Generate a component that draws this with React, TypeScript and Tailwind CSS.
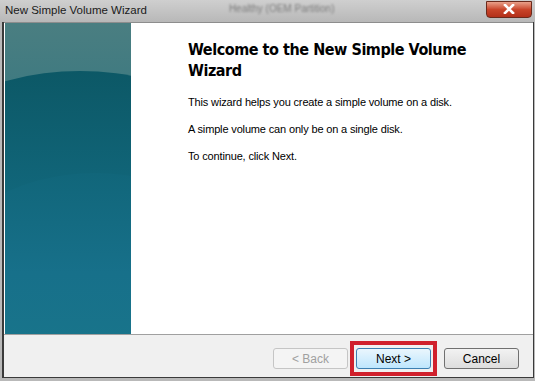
import React from 'react';

function WizardButton({ label, disabled, focused }: { label: string; disabled?: boolean; focused?: boolean }) {
  return (
    <button
      disabled={disabled}
      className={`w-[75px] h-[21px] rounded-[3px] border text-[12px] leading-none ${
        disabled
          ? 'border-[#c5c5c5] bg-[#f4f4f4] text-[#a0a0a0]'
          : focused
          ? 'border-[#3c7fb1] bg-gradient-to-b from-[#eaf6fd] to-[#bee6fd] text-black'
          : 'border-[#707070] bg-gradient-to-b from-[#f2f2f2] to-[#dddddd] text-black'
      }`}
      style={{ fontFamily: '"Liberation Sans", Arial, sans-serif' }}
    >
      {label}
    </button>
  );
}

export default function App() {
  return (
    <div className="w-[535px] h-[381px] overflow-hidden bg-[#b9b9b9] flex flex-col">
      {/* Title bar */}
      <div className="h-[22px] flex items-center bg-gradient-to-b from-[#cfcfcf] to-[#b8b8b8] pl-[5px] pr-[3px] shrink-0">
        <span className="text-[11.5px] text-[#1a1a1a]" style={{ fontFamily: '"Liberation Sans", Arial, sans-serif' }}>
          New Simple Volume Wizard
        </span>
        {/* blurred window behind */}
        <span
          className="ml-[82px] -mt-[6px] text-[10px] text-[#7c7c7c] blur-[1.2px]"
          style={{ fontFamily: '"Liberation Sans", Arial, sans-serif' }}
        >
          Healthy (OEM Partition)
        </span>
        <div className="ml-auto w-[46px] h-[17px] -mt-[4px] rounded-b-[4px] border border-[#6b2a1c] bg-gradient-to-b from-[#e8a08a] via-[#c9452a] to-[#b3301a] flex items-center justify-center">
          <svg width="12" height="10" viewBox="0 0 12 10">
            <path d="M2 1 L10 9 M10 1 L2 9" stroke="#fff" strokeWidth="2.6" strokeLinecap="square" />
          </svg>
        </div>
      </div>

      {/* Window body */}
      <div className="flex-1 ml-[2px] mr-[1px] mb-[3px] border-l-2 border-r border-b border-[#3a3a3a] bg-[#f0f0f0] flex flex-col">
        <div className="h-[312px] flex border-t border-[#8d8d8d] bg-white">
          {/* Side banner */}
          <div className="w-[126px] ml-[1px] relative overflow-hidden bg-gradient-to-b from-[#4a7e81] via-[#2c7480] to-[#1d8592] shrink-0">
            <div className="absolute left-[-110px] top-[48px] w-[370px] h-[240px] rounded-[50%] bg-gradient-to-b from-[#0c5866] via-[#11667a] to-[#187289]" />
            <div className="absolute left-[-60px] top-[150px] w-[300px] h-[200px] rounded-[50%] bg-gradient-to-b from-[#11667a] via-[#17708a] to-[#19768b]" />
          </div>
          <div className="flex-1 pl-[57px] pt-[16px]" style={{ fontFamily: '"Liberation Sans", Arial, sans-serif' }}>
            <h1
              className="text-[16px] font-bold leading-[21px] tracking-[-0.45px] text-black"
              style={{ fontFamily: '"DejaVu Sans Condensed", "DejaVu Sans", Verdana, sans-serif' }}
            >
              Welcome to the New Simple Volume
              <br />
              Wizard
            </h1>
            <div className="mt-[14px] flex flex-col gap-[13px] text-[11px] leading-[14px] tracking-[-0.15px] text-black">
              <p>This wizard helps you create a simple volume on a disk.</p>
              <p>A simple volume can only be on a single disk.</p>
              <p>To continue, click Next.</p>
            </div>
          </div>
        </div>
        <div className="h-px bg-[#a0a0a0]" />
        {/* Buttons */}
        <div className="flex-1 flex items-center justify-end pr-[14px] pt-[5px]">
          <WizardButton label="< Back" disabled />
          <div className="flex ml-[2px] mr-[7px] border-4 border-[#d0202c] px-[2px] py-[3px]">
            <WizardButton label="Next >" focused />
          </div>
          <WizardButton label="Cancel" />
        </div>
      </div>
    </div>
  );
}
